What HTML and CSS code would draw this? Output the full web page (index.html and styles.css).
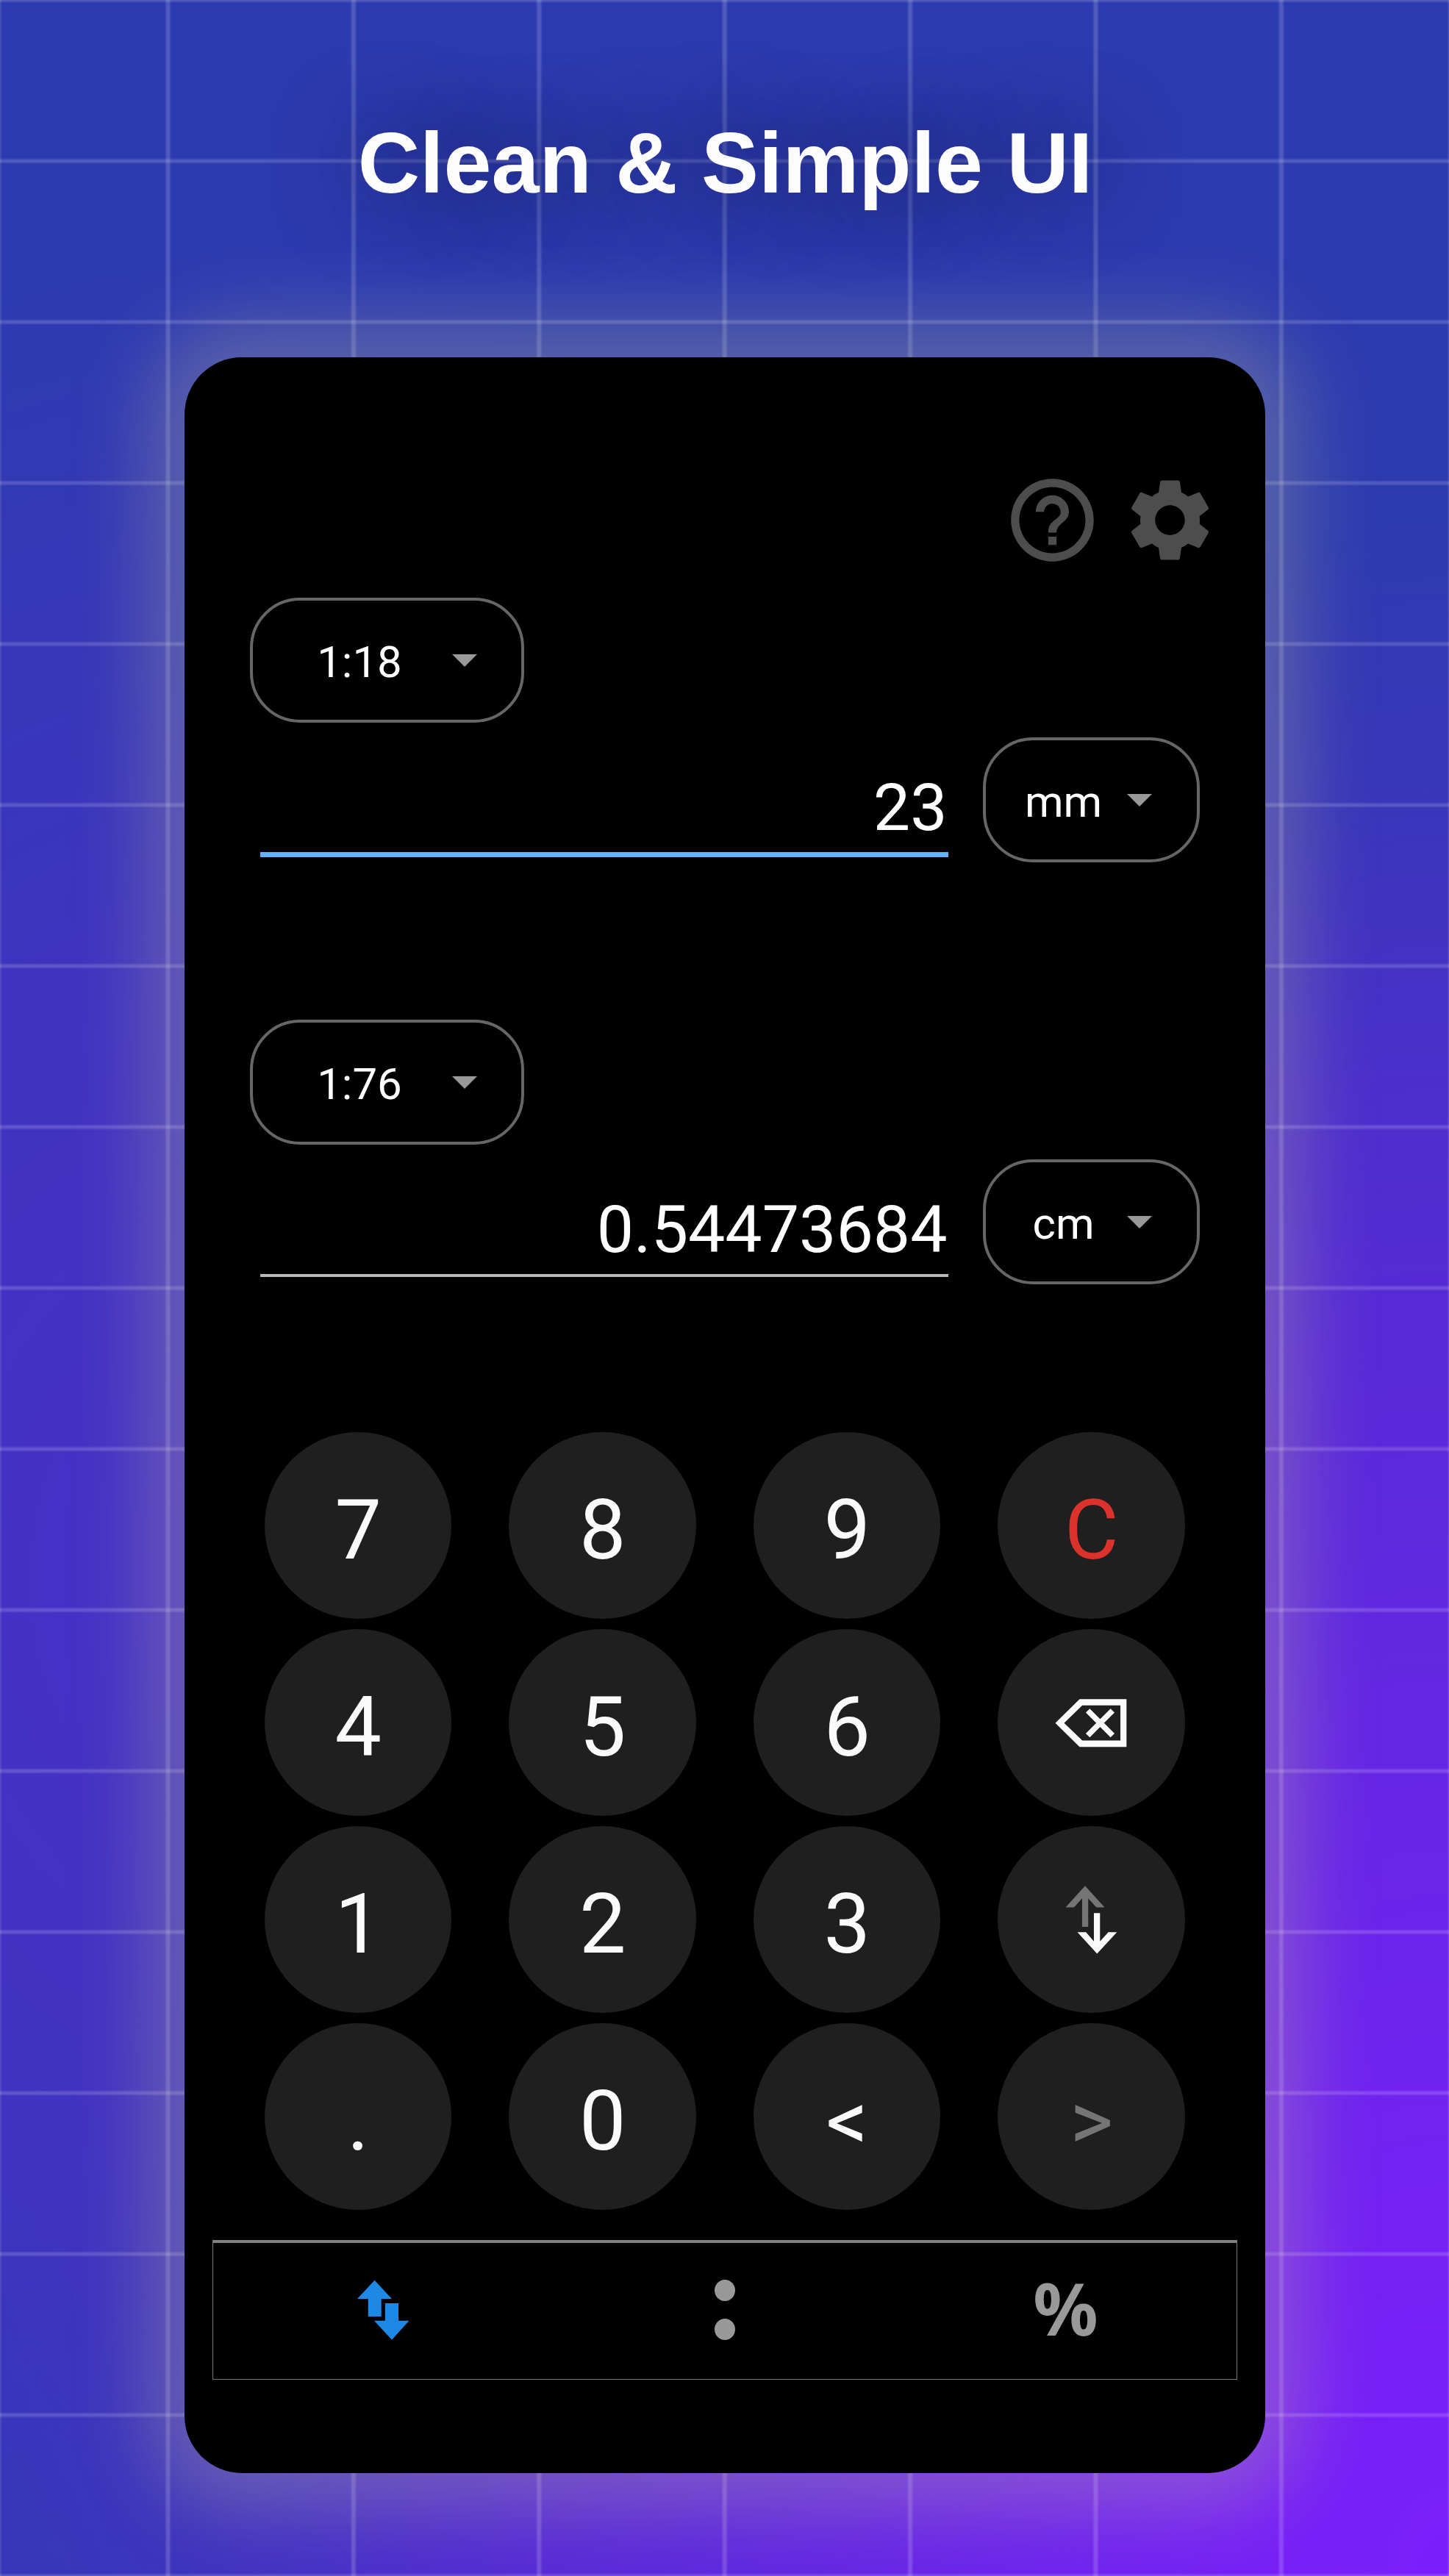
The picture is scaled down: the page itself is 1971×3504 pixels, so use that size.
FILE: index.html
```html
<!DOCTYPE html>
<html lang="en">
<head>
    <meta charset="UTF-8">
    <meta name="viewport" content="width=device-width, initial-scale=1.0">
    <title>Scale Converter</title>
    <link rel="stylesheet" href="styles.css">
</head>
<body>

    <h1 class="title">Clean &amp; Simple UI</h1>

    <div class="phone">
        <div class="toolbar">
            <svg class="tool-icon" viewBox="0 0 24 24"><path d="M11 18h2v-2h-2v2zm1-16C6.48 2 2 6.48 2 12s4.48 10 10 10 10-4.48 10-10S17.52 2 12 2zm0 18c-4.41 0-8-3.59-8-8s3.59-8 8-8 8 3.59 8 8-3.59 8-8 8zm0-14c-2.21 0-4 1.79-4 4h2c0-1.1.9-2 2-2s2 .9 2 2c0 2-3 1.75-3 5h2c0-2.25 3-2.5 3-5 0-2.21-1.79-4-4-4z"/></svg>
            <svg class="tool-icon" viewBox="0 0 24 24"><path d="M19.14 12.94c.04-.3.06-.61.06-.94 0-.32-.02-.64-.07-.94l2.03-1.58c.18-.14.23-.41.12-.61l-1.92-3.32c-.12-.22-.37-.29-.59-.22l-2.39.96c-.5-.38-1.03-.7-1.62-.94l-.36-2.54c-.04-.24-.24-.41-.48-.41h-3.84c-.24 0-.43.17-.47.41l-.36 2.54c-.59.24-1.13.57-1.62.94l-2.39-.96c-.22-.08-.47 0-.59.22L2.74 8.87c-.12.21-.08.47.12.61l2.03 1.58c-.05.3-.09.63-.09.94s.02.64.07.94l-2.03 1.58c-.18.14-.23.41-.12.61l1.92 3.32c.12.22.37.29.59.22l2.39-.96c.5.38 1.03.7 1.62.94l.36 2.54c.05.24.24.41.48.41h3.84c.24 0 .44-.17.47-.41l.36-2.54c.59-.24 1.13-.56 1.62-.94l2.39.96c.22.08.47 0 .59-.22l1.92-3.32c.12-.22.07-.47-.12-.61l-2.01-1.58zM12 15.6c-1.98 0-3.6-1.62-3.6-3.6s1.62-3.6 3.6-3.6 3.6 1.62 3.6 3.6-1.62 3.6-3.6 3.6z"/></svg>
        </div>

        <div class="converter">
            <div class="spinner scale"><span>1:18</span><i class="arrow"></i></div>
            <div class="value-row">
                <div class="value active">23</div>
                <div class="spinner unit"><span>mm</span><i class="arrow"></i></div>
            </div>
        </div>

        <div class="converter">
            <div class="spinner scale"><span>1:76</span><i class="arrow"></i></div>
            <div class="value-row">
                <div class="value">0.54473684</div>
                <div class="spinner unit"><span>cm</span><i class="arrow"></i></div>
            </div>
        </div>

        <div class="keypad">
            <div class="key">7</div>
            <div class="key">8</div>
            <div class="key">9</div>
            <div class="key clear">C</div>
            <div class="key">4</div>
            <div class="key">5</div>
            <div class="key">6</div>
            <div class="key icon">
                <svg viewBox="0 0 254 254">
                    <path fill="#fafafa" fill-rule="evenodd" d="M78.3 127.5 111.3 95H175V160H111.3ZM90.3 127.5 115 151.3H166.7V103.6H115Z"/>
                    <path stroke="#fafafa" stroke-width="7.6" d="M122.4 110.6 156 144.4M156 110.6 122.4 144.4"/>
                </svg>
            </div>
            <div class="key">1</div>
            <div class="key">2</div>
            <div class="key">3</div>
            <div class="key icon">
                <svg viewBox="0 0 254 254">
                    <path fill="#757575" d="M118.7 81 145.3 110.3H134L123 98.1V136.7H114.7V98.1L103.7 110.3H92.3Z"/>
                    <path fill="#fafafa" d="M130.7 118.1H139V156.4L150.3 143.9H162L135 173.1 108.3 143.9H120L130.7 156.4Z"/>
                </svg>
            </div>
            <div class="key">.</div>
            <div class="key">0</div>
            <div class="key">&lt;</div>
            <div class="key disabled">&gt;</div>
        </div>

        <div class="navbar">
            <div class="nav-item">
                <svg class="swap" viewBox="0 0 72 82">
                    <path d="M24.5.7 48 26H33.7V50H15.8V26H1ZM38.8 32H57V55.7H71.4L48 81.7 24 55.7H38.8Z"/>
                </svg>
            </div>
            <div class="nav-item ratio"><i></i><i></i></div>
            <div class="nav-item percent">%</div>
        </div>
    </div>

</body>
</html>
```
FILE: styles.css
```css
* {
    box-sizing: border-box;
}

body {
    margin: 0;
    height: 3504px;
    overflow: hidden;
    display: flex;
    flex-direction: column;
    align-items: center;
    font-family: Roboto, "Liberation Sans", sans-serif;
    /* grid lines on top of the colour washes */
    background:
        linear-gradient(rgba(255,255,255,.1), rgba(255,255,255,.1)) 0 0 / 2px 100% no-repeat,
        linear-gradient(rgba(255,255,255,.1), rgba(255,255,255,.1)) 100% 0 / 2px 100% no-repeat,
        linear-gradient(90deg, transparent, rgba(255,255,255,.17) 3px, rgba(255,255,255,.17) 6px, transparent 9px) 224px 0 / 252.4px 100%,
        linear-gradient(transparent, rgba(255,255,255,.17) 3px, rgba(255,255,255,.17) 5px, transparent 8px) 0 -4px / 100% 219px,
        radial-gradient(ellipse 2000px 2800px at 100% 100%, #7b1ffa 0%, #7621f5 13%, #6e24ed 28%, #6128e0 47%, #562bd5 63%, rgba(74,48,202,.95) 75%, rgba(68,50,194,.55) 86%, rgba(45,59,176,0) 100%),
        radial-gradient(ellipse 1350px 1800px at 300px 2150px, #4830c8 0%, rgba(72,48,200,.7) 45%, rgba(72,48,200,0) 100%),
        #2d3bb0;
}

.title {
    margin: 152px 0 0;
    padding-left: 2px;
    height: 334px;
    font: bold 116.8px/140px "Liberation Sans", Arial, sans-serif;
    color: #fdfdfd;
    text-shadow: 0 0 120px rgba(15,20,50,.9);
}

.phone {
    width: 1470px;
    height: 2878px;
    flex: none;
    padding: 154px 38px 0 38px;
    border-radius: 78px;
    background: #000;
    box-shadow: 0 0 100px 52px rgba(210,212,146,.26);
    color: #fff;
}

.toolbar {
    display: flex;
    justify-content: flex-end;
    gap: 25px;
    padding-right: 24px;
    height: 173px;
}

.tool-icon {
    width: 135px;
    height: 135px;
    fill: #4d4d4d;
}

.converter {
    height: 574px;
    padding: 0 51px;
}

.spinner {
    display: flex;
    align-items: center;
    height: 170px;
    border: 4px solid #666;
    border-radius: 68px;
    font-size: 60px;
}

.spinner span {
    text-align: center;
    padding-top: 4px;
}

.scale {
    width: 373px;
}

.scale span {
    width: 291px;
}

.scale .arrow {
    margin-left: -20px;
}

.unit {
    width: 295px;
    flex: none;
}

.unit span {
    width: 212px;
}

.unit .arrow {
    margin-left: -20px;
}

.arrow {
    border: 17px solid transparent;
    border-top-color: #999;
    border-bottom: 0;
}

.value-row {
    display: flex;
    margin-top: 20px;
    padding-left: 14px;
}

.value {
    flex: 1;
    height: 160px;
    margin-right: 47px;
    padding: 42px 1px 0 0;
    border-bottom: 4px solid #b8b8b8;
    font-size: 89.6px;
    line-height: 108px;
    text-align: right;
}

.value.active {
    height: 163px;
    border-bottom: 7px solid #61b1fc;
}

.keypad {
    display: grid;
    grid-template-columns: repeat(4, 254.5px);
    grid-auto-rows: 254.5px;
    gap: 13.6px 78px;
    margin: -13.5px 0 0 71px;
}

.key {
    display: flex;
    align-items: center;
    justify-content: center;
    border-radius: 50%;
    background: #1f1f1f;
    color: #fafafa;
    font-size: 113px;
    line-height: 132px;
    padding: 14px 0 0 1px;
}

.key.icon {
    padding: 0;
}

.key.clear {
    color: #dc322c;
}

.key.disabled {
    color: #757575;
}

.navbar {
    display: flex;
    height: 190px;
    margin-top: 40.5px;
    border: 1px solid #777;
    border-top: 4px solid #808080;
}

.nav-item {
    flex: 1;
    display: flex;
    align-items: center;
    justify-content: center;
    padding-bottom: 3px;
}

.swap {
    width: 72px;
    height: 82px;
    margin-right: 2px;
    fill: #1e88e5;
}

.ratio {
    flex-direction: column;
    gap: 24px;
}

.ratio i {
    width: 28px;
    height: 29px;
    border-radius: 50%;
    background: #999;
}

.percent {
    padding-bottom: 9px;
    font: bold 98px/120px "Noto Sans", sans-serif;
    color: #999;
}
```
